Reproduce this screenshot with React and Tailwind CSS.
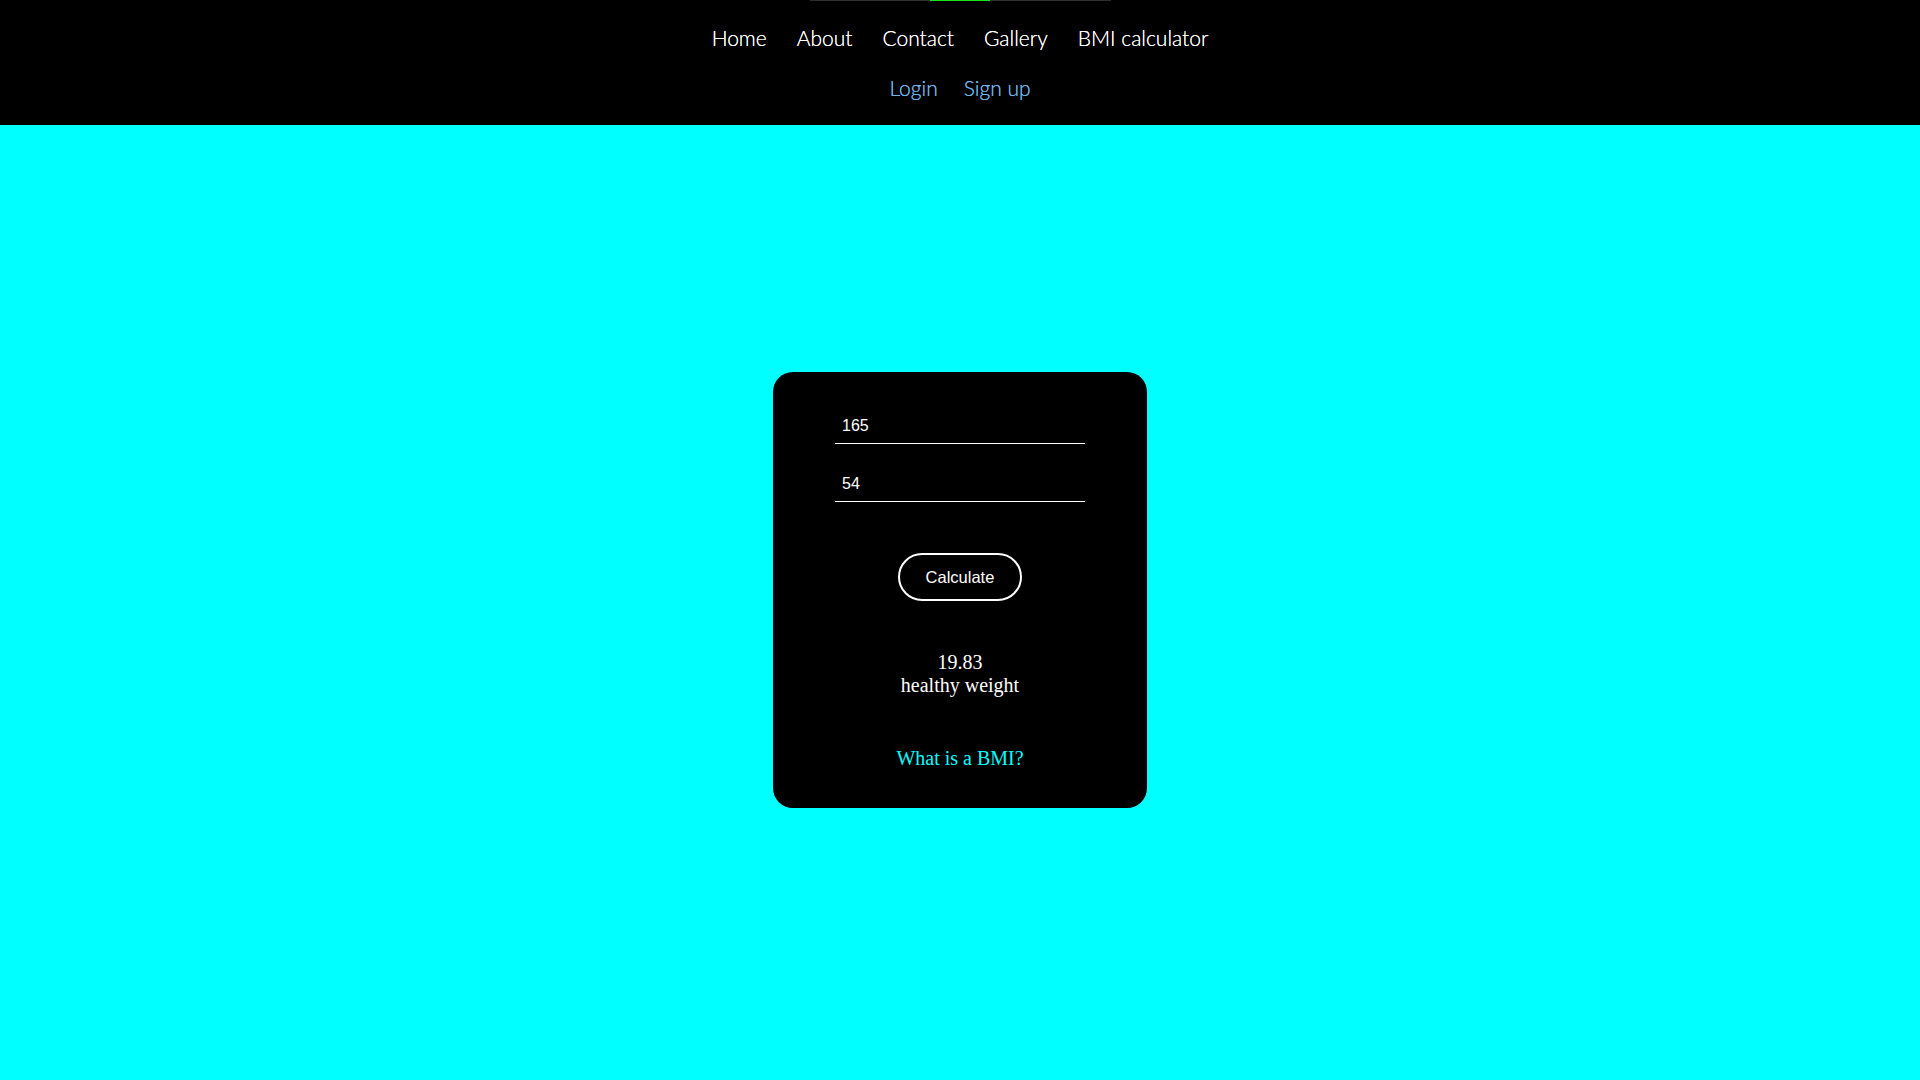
import React from "react";

export default function App() {
  const navFont = { fontFamily: "Lato, 'Open Sans', sans-serif" };
  return (
    <div className="min-h-screen w-full bg-[#00ffff]">
      <header className="h-[125px] w-full bg-black flex flex-col items-center" style={navFont}>
        <div className="w-[301px] h-px bg-[#2e2e2e] flex justify-center">
          <div className="w-[60px] h-px bg-[#19e619]" />
        </div>
        <nav className="mt-[24px] flex gap-[30px] text-[21px] leading-[25px] font-light text-white [text-shadow:0_0_0.4px_#ffffff]">
          <a href="#">Home</a>
          <a href="#">About</a>
          <a href="#">Contact</a>
          <a href="#">Gallery</a>
          <a href="#">BMI calculator</a>
        </nav>
        <nav className="mt-[25px] flex gap-[26px] text-[21px] leading-[25px] font-light text-[#6cb6ec] [text-shadow:0_0_0.4px_#6cb6ec]">
          <a href="#">Login</a>
          <a href="#">Sign up</a>
        </nav>
      </header>
      <main className="w-full flex justify-center">
        <div className="mt-[247px] w-[374px] rounded-[20px] bg-black pt-[38px] pb-[38px] flex flex-col items-center">
          <input
            type="text"
            defaultValue="165"
            className="w-[250px] h-[34px] border-b border-white bg-transparent text-white pl-[7px] pr-[6px] pb-[1px] text-[16px] outline-none"
            style={{ fontFamily: "'Liberation Sans', Arial, sans-serif" }}
          />
          <input
            type="text"
            defaultValue="54"
            className="mt-[24px] w-[250px] h-[34px] border-b border-white bg-transparent text-white pl-[7px] pr-[6px] pb-[1px] text-[16px] outline-none"
            style={{ fontFamily: "'Liberation Sans', Arial, sans-serif" }}
          />
          <button
            className="mt-[51px] w-[124px] h-[48px] border-2 border-white rounded-full text-white text-[16.5px] bg-black"
            style={{ fontFamily: "'Liberation Sans', Arial, sans-serif" }}
          >
            Calculate
          </button>
          <div
            className="mt-[50px] text-white text-[20px] leading-[23px] text-center"
            style={{ fontFamily: "'Liberation Serif', 'Times New Roman', serif" }}
          >
            <div>19.83</div>
            <div>healthy weight</div>
          </div>
          <a
            href="#"
            className="mt-[50px] text-[#00ffff] text-[20px] leading-[23px]"
            style={{ fontFamily: "'Liberation Serif', 'Times New Roman', serif" }}
          >
            What is a BMI?
          </a>
        </div>
      </main>
    </div>
  );
}
